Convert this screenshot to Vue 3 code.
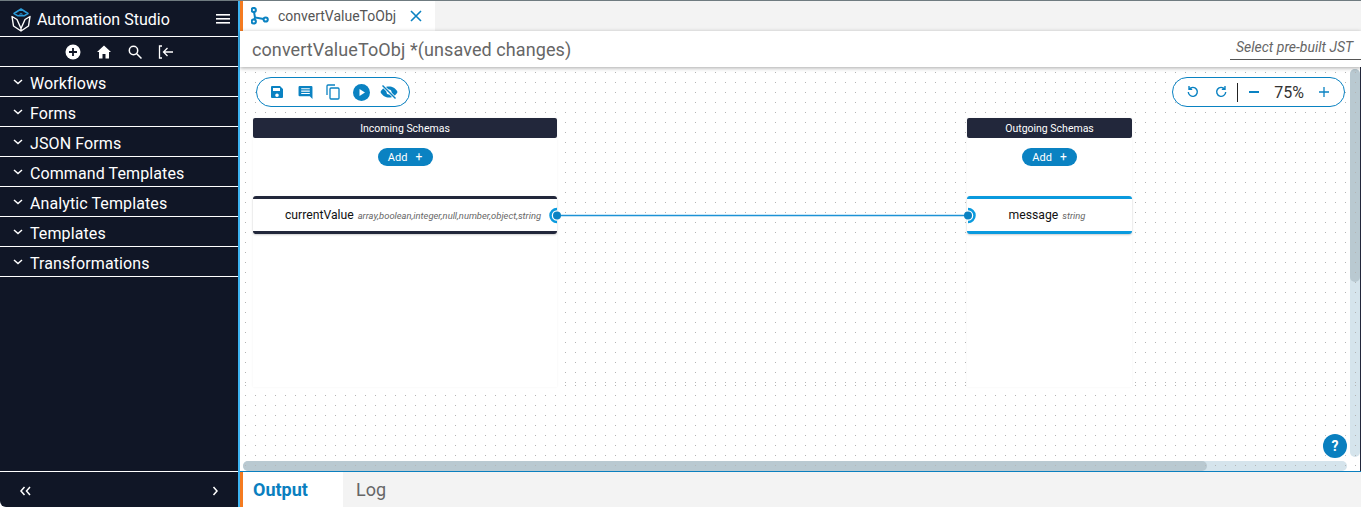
<template>
  <div class="app">
    <aside class="sidebar">
      <div class="brand">
        <svg class="logo" width="22" height="26" viewBox="0 0 22 26" fill="none">
          <path d="M4 7.500 11 3l7 4.500-3.500 2.200h-7z" stroke="#2b9bd8" stroke-width="1.500" stroke-linejoin="round" />
          <path d="M8.500 8.600h5L11 7z" fill="#2b9bd8" />
          <path d="M2 10.500 3.500 20 11 25l7.500-5L20 10.500l-5 3-4 9-4-9zM11 25v-2.500" stroke="#fff" stroke-width="1.400" stroke-linejoin="round" />
        </svg>
        <span class="brand-name">Automation Studio</span>
        <svg class="menu" width="14" height="12" viewBox="0 0 14 12" fill="#fff">
          <rect y="1" width="14" height="1.600" />
          <rect y="5" width="14" height="1.600" />
          <rect y="9" width="14" height="1.600" />
        </svg>
      </div>
      <div class="actions">
        <svg width="16" height="16" viewBox="0 0 16 16">
          <circle cx="8" cy="8" r="7.500" fill="#fff" />
          <path d="M8 4v8M4 8h8" stroke="#101626" stroke-width="1.800" />
        </svg>
        <svg width="16" height="16" viewBox="0 0 16 16" fill="#fff">
          <path d="M8 1.500 1 8h2v6.500h3.500V10h3v4.500H13V8h2z" />
        </svg>
        <svg width="16" height="16" viewBox="0 0 16 16" fill="none" stroke="#fff" stroke-width="1.500">
          <circle cx="6.500" cy="6.500" r="4.200" />
          <path d="M9.700 9.700 14.500 14.500" />
        </svg>
        <svg width="16" height="16" viewBox="0 0 16 16" fill="none" stroke="#fff" stroke-width="1.300">
          <path d="M4 2H1.500v12H4M15 8H6M9.500 4 5.500 8l4 4" />
        </svg>
      </div>
      <ul class="nav">
        <li v-for="item in navItems" :key="item" class="nav-item">
          <svg width="10" height="6" viewBox="0 0 10 6" fill="none" stroke="#fff" stroke-width="1.500">
            <path d="M1 1l4 3.500L9 1" />
          </svg>
          <span>{{ item }}</span>
        </li>
      </ul>
      <div class="side-foot">
        <svg width="11" height="10" viewBox="0 0 11 10" fill="none" stroke="#fff" stroke-width="1.500">
          <path d="M4.500 1 1 5l3.500 4M10 1 6.500 5 10 9" />
        </svg>
        <svg width="6" height="10" viewBox="0 0 6 10" fill="none" stroke="#fff" stroke-width="1.500">
          <path d="M1.500 1 5 5 1.500 9" />
        </svg>
      </div>
    </aside>

    <main class="main">
      <div class="tabbar">
        <div class="tab">
          <svg width="19" height="19" viewBox="0 0 19 19" fill="none" stroke="#0a82c2" stroke-width="2">
            <circle cx="2.800" cy="3" r="2.100" />
            <circle cx="2.800" cy="14.500" r="2.100" />
            <circle cx="14.700" cy="12.500" r="2.100" />
            <path d="M3 5 4 10.500l8.600 1.600M4 10.500l-.8 2" />
          </svg>
          <span class="tab-name">convertValueToObj</span>
          <svg width="12" height="12" viewBox="0 0 12 12" stroke="#0a82c2" stroke-width="1.600">
            <path d="M1 1l10 10M11 1 1 11" />
          </svg>
        </div>
      </div>
      <div class="titlebar">
        <h1 class="title">convertValueToObj *(unsaved changes)</h1>
        <div class="jst">Select pre-built JST</div>
      </div>

      <div class="canvas">
        <div class="scroll-v"><div class="thumb-v"></div></div>
        <div class="scroll-h"><div class="thumb-h"></div></div>
        <div class="dots dots-top"></div>
        <div class="dots dots-bottom"></div>

        <div class="pill tools">
          <svg width="14" height="14" viewBox="0 0 14 14" fill="#0a82c2">
            <path fill-rule="evenodd" d="M2 1h8l3 3v8a1 1 0 0 1-1 1H2a1 1 0 0 1-1-1V2a1 1 0 0 1 1-1zm1 2v3h7V3zm4 5.500a1.800 1.800 0 1 0 0 3.600 1.800 1.800 0 0 0 0-3.600z" />
          </svg>
          <svg width="15" height="15" viewBox="0 0 14 14">
            <path d="M1.500 1h11a1 1 0 0 1 1 1v11L11 10.500H1.500a1 1 0 0 1-1-1V2a1 1 0 0 1 1-1z" fill="#0a82c2" />
            <path d="M3 3.500h8M3 5.700h8M3 8h8" stroke="#fff" />
          </svg>
          <svg width="14" height="16" viewBox="0 0 14 16" fill="none" stroke="#0a82c2" stroke-width="1.300">
            <path d="M9 1H2a1 1 0 0 0-1 1v9" />
            <rect x="4" y="4" width="9" height="11" rx="1" />
          </svg>
          <svg width="17" height="17" viewBox="0 0 17 17">
            <circle cx="8.500" cy="8.500" r="8.500" fill="#0a82c2" />
            <path d="M6.500 5v7l5.500-3.500z" fill="#fff" />
          </svg>
          <svg width="18" height="16" viewBox="0 0 18 16">
            <path d="M0.500 8C2.500 4 5.500 2.500 9 2.500S15.500 4 17.500 8c-2 4-5 5.500-8.500 5.500S2.500 12 0.500 8z" fill="#0a82c2" />
            <circle cx="9" cy="8" r="2.500" fill="#fff" />
            <path d="M2.500 1.500l13 13" stroke="#fff" stroke-width="3" />
            <path d="M2.500 1.500l13 13" stroke="#0a82c2" stroke-width="1.400" />
          </svg>
        </div>

        <div class="pill zoom">
          <svg class="undo" width="12" height="13" viewBox="0 0 12 13" fill="none" stroke="#0a82c2" stroke-width="1.400">
            <path d="M2.300 4a4.500 4.500 0 1 1-1 3M2 1v3.200h3.200" />
          </svg>
          <svg class="redo" width="12" height="13" viewBox="0 0 12 13" fill="none" stroke="#0a82c2" stroke-width="1.400">
            <path d="M9.700 4a4.500 4.500 0 1 0 1 3M10 1v3.200H6.800" />
          </svg>
          <span class="zoom-sep"></span>
          <span class="zoom-minus"></span>
          <span class="zoom-val">75%</span>
          <svg width="10" height="10" viewBox="0 0 10 10" stroke="#0a82c2" stroke-width="1.300">
            <path d="M5 0v10M0 5h10" />
          </svg>
        </div>

        <div class="schemas">
          <section class="panel panel-in">
            <div class="panel-head">Incoming Schemas</div>
            <div class="add">Add <span class="add-plus">+</span></div>
            <div class="row row-dark">
              <span class="row-name">currentValue</span>
              <em class="row-type">array,boolean,integer,null,number,object,string</em>
            </div>
          </section>
          <section class="panel panel-out">
            <div class="panel-head">Outgoing Schemas</div>
            <div class="add">Add <span class="add-plus">+</span></div>
            <div class="row row-blue">
              <span class="row-name">message</span>
              <em class="row-type">string</em>
            </div>
          </section>
        </div>

        <svg class="link" width="434" height="19" viewBox="0 0 434 19" fill="none">
          <path d="M11 9.500h411" stroke="#1c92d6" stroke-width="1.400" />
          <circle cx="11" cy="9.500" r="4" fill="#0a82c2" />
          <path d="M11 3a6.500 6.500 0 0 0 0 13" stroke="#0a9ade" stroke-width="2.500" />
          <circle cx="422" cy="9.500" r="4" fill="#0a82c2" />
          <path d="M422 3a6.500 6.500 0 0 1 0 13" stroke="#0a9ade" stroke-width="2.500" />
        </svg>

        <div class="help">?</div>
      </div>

      <div class="bottom">
        <div class="btab active">Output</div>
        <div class="btab">Log</div>
      </div>
    </main>
  </div>
</template>

<script setup>
const navItems = [
  "Workflows",
  "Forms",
  "JSON Forms",
  "Command Templates",
  "Analytic Templates",
  "Templates",
  "Transformations",
];
</script>

<style>
html,
body {
  margin: 0;
  overflow: hidden;
}
</style>

<style scoped>
.app {
  display: flex;
  width: 1361px;
  height: 507px;
  box-sizing: border-box;
  border-top: 1px solid #6f7b80;
  background: #fff;
  font-family: Roboto, "Liberation Sans", sans-serif;
  overflow: hidden;
}
.sidebar {
  display: flex;
  flex-direction: column;
  flex: none;
  width: 238px;
  background: #101626;
  color: #fff;
  border-bottom-left-radius: 6px;
}
.brand {
  display: flex;
  align-items: center;
  height: 35px;
  padding: 0 8px 0 10px;
  border-bottom: 1px solid #fff;
}
.logo {
  flex: none;
}
.brand-name {
  margin-left: 5px;
  padding-top: 2px;
  font-size: 16px;
  flex: 1;
}
.actions {
  display: flex;
  align-items: center;
  justify-content: center;
  gap: 15px;
  height: 29px;
  border-bottom: 1px solid #fff;
}
.nav {
  flex: 1;
  margin: 0;
  padding: 0;
  list-style: none;
}
.nav-item {
  display: flex;
  align-items: center;
  gap: 7px;
  height: 29px;
  padding-left: 13px;
  border-bottom: 1px solid #fff;
  font-size: 16px;
  letter-spacing: 0.1px;
}
.nav-item span {
  padding-top: 4px;
}
.side-foot {
  display: flex;
  align-items: center;
  justify-content: space-between;
  height: 33px;
  padding: 2px 20px 0;
  border-top: 1px solid #fff;
}
.main {
  display: flex;
  flex-direction: column;
  flex: 1;
  min-width: 0;
  border-left: 2px solid #3db4f2;
}
.tabbar {
  height: 30px;
  flex: none;
  background: #f3f3f3;
}
.tab {
  display: flex;
  align-items: center;
  width: 184px;
  height: 30px;
  padding-left: 8px;
  border-left: 3px solid #f47b20;
  background: #fff;
}
.tab-name {
  margin: 0 14px 0 8px;
  font-size: 14px;
  color: #555;
}
.titlebar {
  display: flex;
  align-items: center;
  justify-content: space-between;
  flex: none;
  height: 36px;
  padding-left: 12px;
  background: #fff;
  box-shadow: 0 1px 4px rgba(0, 0, 0, 0.35);
  position: relative;
  z-index: 5;
}
.title {
  margin: 0;
  font-size: 18px;
  font-weight: 400;
  letter-spacing: 0.09px;
  color: #666;
}
.jst {
  width: 125px;
  height: 20px;
  padding-left: 6px;
  border-bottom: 1px solid #555;
  font-size: 14px;
  line-height: 17px;
  font-style: italic;
  color: #666;
}
.canvas {
  position: relative;
  flex: 1;
  min-height: 0;
  background: #fff;
  border-right: 1px solid #22273b;
}
.dots {
  position: absolute;
  left: 0;
  right: 0;
  z-index: 1;
  background-image: radial-gradient(circle at 5.5px 5.5px, #b5b5b5 0.5px, transparent 0.9px);
  background-size: 10px 10px;
}
.dots-top {
  top: 0;
  height: 316px;
}
.dots-bottom {
  top: 316px;
  bottom: 0;
  background-position: 0 -3px;
}
.pill {
  position: absolute;
  top: 10px;
  display: flex;
  align-items: center;
  height: 28px;
  background: #fff;
  border: 1px solid #0a82c2;
  border-radius: 15px;
  z-index: 3;
}
.tools {
  left: 16px;
  display: grid;
  grid-template-columns: repeat(5, 28px);
  justify-items: center;
  width: 146px;
  padding-left: 6px;
}
.zoom {
  right: 15px;
  width: 171px;
}
.undo {
  margin: 0 0 1px 14px;
}
.redo {
  margin: 0 0 1px 16px;
}
.zoom-sep {
  width: 1px;
  height: 19px;
  margin-left: 10px;
  background: #222;
}
.zoom-minus {
  width: 10px;
  height: 1.500px;
  margin-left: 11px;
  background: #0a82c2;
}
.zoom-val {
  width: 40px;
  margin: 0 10px;
  padding-top: 1px;
  font-size: 16px;
  color: #333;
  text-align: center;
}
.schemas {
  position: relative;
  z-index: 2;
  display: flex;
  gap: 410px;
  padding: 51px 0 0 13px;
}
.panel {
  height: 269px;
  background: #fff;
  box-shadow: 0 0 2px rgba(0, 0, 0, 0.06);
}
.panel-in {
  width: 304px;
}
.panel-out {
  width: 165px;
}
.panel-head {
  height: 20px;
  background: #22273b;
  border-radius: 2px;
  color: #fff;
  font-size: 10.500px;
  line-height: 21px;
  text-align: center;
}
.add {
  display: flex;
  align-items: center;
  justify-content: center;
  gap: 8px;
  width: 55px;
  height: 18px;
  margin: 10px auto 30px;
  background: #0a82c2;
  border-radius: 9px;
  color: #fff;
  font-size: 11px;
}
.add-plus {
  font-size: 12px;
}
.row {
  display: flex;
  align-items: center;
  justify-content: center;
  gap: 4px;
  height: 32px;
  background: #fff;
  border-radius: 3px;
  box-shadow: 0 1px 2px rgba(0, 0, 0, 0.2);
}
.row-dark {
  padding-left: 16px;
  border-top: 3px solid #22273b;
  border-bottom: 3px solid #22273b;
}
.row-blue {
  padding-right: 5px;
  border-top: 3px solid #0a9ade;
  border-bottom: 3px solid #0a9ade;
}
.row-name {
  font-size: 12.200px;
  color: #111;
}
.row-type {
  font-size: 9.400px;
  color: #666;
}
.link {
  position: absolute;
  left: 306px;
  top: 139px;
  z-index: 3;
}
.help {
  position: absolute;
  right: 13px;
  bottom: 13px;
  width: 24px;
  height: 24px;
  border-radius: 50%;
  background: #0a7fbf;
  color: #fff;
  font-size: 14px;
  font-weight: 700;
  line-height: 24px;
  text-align: center;
  z-index: 3;
}
.scroll-v {
  position: absolute;
  top: 2px;
  right: 0;
  bottom: 14px;
  width: 10px;
  background: #d5e4ec;
  border-radius: 5px;
}
.thumb-v {
  height: 213px;
  background: #b9c9d1;
  border-radius: 5px;
}
.scroll-h {
  position: absolute;
  left: 3px;
  right: 13px;
  bottom: 0;
  height: 10px;
  background: #d5e4ec;
  border-radius: 5px;
}
.thumb-h {
  width: 964px;
  height: 100%;
  background: #b9c9d1;
  border-radius: 5px;
}
.bottom {
  display: flex;
  flex: none;
  height: 35px;
  border-top: 1px solid #0a7fbf;
  background: #f3f3f3;
}
.btab {
  width: 100px;
  padding-left: 13px;
  box-sizing: border-box;
  font-size: 18px;
  line-height: 35px;
  color: #666;
}
.btab.active {
  width: 103px;
  border-left: 3px solid #f47b20;
  padding-left: 10px;
  background: #fff;
  color: #0a7fbf;
  font-weight: 700;
}
</style>
